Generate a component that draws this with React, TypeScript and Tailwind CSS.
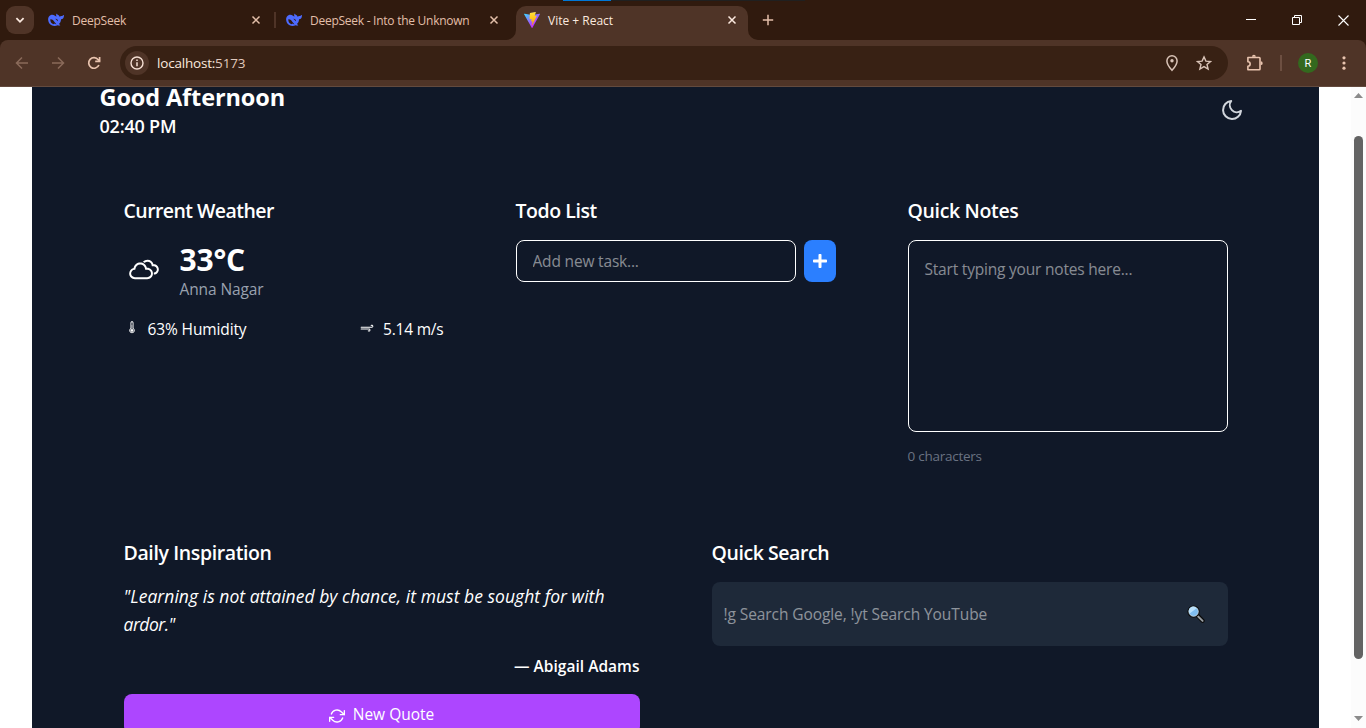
import React from 'react';
import { FiMoon, FiRefreshCw } from 'react-icons/fi';
import { FaPlus } from 'react-icons/fa';
import { WiCloudy, WiStrongWind, WiThermometer } from 'react-icons/wi';

function WhaleIcon() {
  return (
    <svg width="16" height="16" viewBox="0 0 16 16" fill="none" className="shrink-0">
      <path
        fill="#4d6bfe"
        d="M15.800 3c-.2-.1-.3.1-.5.2-.4.5-.9.700-1.500.7-.9-.1-1.600.2-2.300.9-.1-.9-.6-1.400-1.300-1.700-.4-.2-.8-.4-1-.8-.1-.3-.1-.6-.3-.6-.3 0-.4.2-.5.4-.4.8-.3 1.700.2 2.400-.6.1-1-.3-1.600-.8C5.700 2.900 4.400 2.500 2.900 3 1 3.700.1 5.300.1 7.600c.1 2.600 1.300 4.600 3.500 5.700 1.900 1 4.300.9 6-.1.5.3 1.600.5 2.300.3.500-.2.400-.6 0-.8-.700-.2-1-.5-1-.6 1.500-1.400 2-3 2.200-4.900 1.600-.1 2.600-1.200 2.800-3 .1-.5.200-1-.1-1.200Z"
      />
      <path
        fill="#301a0e"
        d="M2.300 7.400c2-.3 3.200 1.200 4.200 2.500.9 1.200 1.600 1.900 2.300 2.200-.9.300-1.900 0-2.700-.7l-.5.900C3.300 11.500 2.200 9.600 2.300 7.400Z"
      />
      <path fill="#301a0e" d="M7.400 6.900c1.200-.3 2.300.5 2.500 1.900l-.5.500c-.2-.9-.8-1.600-2-2.400Z" />
    </svg>
  );
}

function ViteIcon() {
  return (
    <svg width="16" height="16" viewBox="0 0 256 257" className="shrink-0">
      <defs>
        <linearGradient id="vite-shield" x1="-.8%" x2="57.6%" y1="7.700%" y2="78.400%">
          <stop offset="0%" stopColor="#41D1FF" />
          <stop offset="100%" stopColor="#BD34FE" />
        </linearGradient>
        <linearGradient id="vite-bolt" x1="43.400%" x2="50.300%" y1="2.200%" y2="89%">
          <stop offset="0%" stopColor="#FFEA83" />
          <stop offset="8.300%" stopColor="#FFDD35" />
          <stop offset="100%" stopColor="#FFA800" />
        </linearGradient>
      </defs>
      <path
        fill="url(#vite-shield)"
        d="M255.153 37.938L134.897 252.976c-2.483 4.440-8.862 4.466-11.382.048L.875 37.958c-2.746-4.814 1.371-10.646 6.827-9.670l120.385 21.517a6.537 6.537 0 0 0 2.322-.004l117.867-21.483c5.438-.991 9.574 4.796 6.877 9.620Z"
      />
      <path
        fill="url(#vite-bolt)"
        d="M185.432.063L96.440 17.501a3.268 3.268 0 0 0-2.634 3.014l-5.474 92.456a3.268 3.268 0 0 0 3.997 3.378l24.777-5.718c2.318-.535 4.413 1.507 3.936 3.838l-7.361 36.047c-.495 2.426 1.782 4.500 4.151 3.780l15.304-4.649c2.372-.720 4.652 1.360 4.150 3.788l-11.698 56.621c-.732 3.542 3.979 5.473 5.943 2.437l1.313-2.028l72.516-144.720c1.215-2.423-.880-5.186-3.540-4.672l-25.505 4.922c-2.396.462-4.435-1.770-3.759-4.114l16.646-57.705c.677-2.350-1.370-4.583-3.769-4.113Z"
      />
    </svg>
  );
}

function CloseIcon({ color }: { color: string }) {
  return (
    <svg width="16" height="16" viewBox="0 0 16 16" className="shrink-0" stroke={color} strokeWidth="1.5">
      <path d="M4.500 4.500l7 7M11.500 4.500l-7 7" />
    </svg>
  );
}

function TabStrip() {
  return (
    <div className="relative flex h-10 items-center bg-[#301a0e] text-[12px] text-[#e3bfa9]">
      <div className="absolute top-0 left-[563px] flex h-px">
        <div className="w-12 bg-[#0078d7]" />
        <div className="w-[194px] bg-[#202020]" />
      </div>
      <div className="ml-1.5 flex size-7 items-center justify-center rounded-[9px] bg-[#4f3427]">
        <svg width="10" height="10" viewBox="0 0 10 10" fill="none" stroke="#fbe9df" strokeWidth="1.800">
          <path d="M1.400 3.200L5 6.800l3.600-3.600" />
        </svg>
      </div>
      <div className="ml-3.5 flex w-[216px] items-center">
        <WhaleIcon />
        <span className="ml-2 flex-1 pt-0.5 tracking-[-0.23px]">DeepSeek</span>
        <CloseIcon color="#e3bfa9" />
      </div>
      <div className="ml-2.5 h-4 w-0.5 bg-[#4f3427]" />
      <div className="ml-2.5 flex w-[216px] items-center">
        <WhaleIcon />
        <span className="ml-2 flex-1 pt-0.5 tracking-[-0.26px]">DeepSeek - Into the Unknown</span>
        <CloseIcon color="#e3bfa9" />
      </div>
      <div className="ml-1 flex h-10 items-end">
        <svg width="10" height="10" viewBox="0 0 10 10">
          <path d="M0 10A10 10 0 0 0 10 0V10Z" fill="#4f3427" />
        </svg>
        <div className="flex h-[34px] w-[232px] items-center rounded-t-[10px] bg-[#4f3427] pr-2 pb-[6px] pl-2 text-[#fbe9df]">
          <ViteIcon />
          <span className="ml-2 flex-1 pt-px">Vite + React</span>
          <CloseIcon color="#fbe9df" />
        </div>
        <svg width="10" height="10" viewBox="0 0 10 10">
          <path d="M10 10A10 10 0 0 1 0 0V10Z" fill="#4f3427" />
        </svg>
      </div>
      <svg width="12" height="12" viewBox="0 0 12 12" className="ml-1" stroke="#e3bfa9" strokeWidth="1.500">
        <path d="M6 .8v10.400M.8 6h10.400" />
      </svg>
      <div className="mr-[17px] ml-auto flex items-center">
        <svg width="10" height="10" viewBox="0 0 10 10" shapeRendering="crispEdges">
          <path d="M0 4h10v1H0z" fill="#fff" />
        </svg>
        <svg width="10" height="10" viewBox="0 0 10 10" className="ml-9" fill="none" stroke="#fff">
          <path d="M.5 2.500h7v7h-7zM2.500 2.500V.5h7v7h-2" />
        </svg>
        <svg width="11" height="11" viewBox="0 0 11 11" className="ml-9" stroke="#fff" strokeWidth="1.100">
          <path d="M.5 .5l10 10M10.500 .5l-10 10" />
        </svg>
      </div>
    </div>
  );
}

function Toolbar() {
  return (
    <div className="bg-[#301a0e]">
      <div className="flex h-[47px] items-center rounded-t-lg border-b border-[#634a3e] bg-[#4f3427]">
        <svg width="14" height="14" viewBox="0 0 14 14" className="ml-[15px]" fill="none" stroke="#8a6a5a" strokeWidth="1.500">
          <path d="M13 7H1.500M7 1.500L1.500 7 7 12.500" />
        </svg>
        <svg width="14" height="14" viewBox="0 0 14 14" className="ml-[22px]" fill="none" stroke="#8a6a5a" strokeWidth="1.500">
          <path d="M1 7h11.500M7 1.500L12.500 7 7 12.500" />
        </svg>
        <svg width="14" height="14" viewBox="0 0 14 14" className="ml-[22px]" fill="none" stroke="#e9c4af" strokeWidth="1.700">
          <path d="M11.900 9A5.300 5.300 0 1 1 11.200 3.700L12.700 5.200" />
          <path d="M12.600 1v4.400H8.200" />
        </svg>
        <div className="ml-[19px] flex h-[34px] w-[1108px] items-center rounded-full bg-[#382114] pr-4 pl-[5px]">
          <div className="flex size-6 items-center justify-center rounded-full bg-[#4f3427]">
            <svg width="14" height="14" viewBox="0 0 14 14" fill="none" stroke="#f5dfd3" strokeWidth="1.400">
              <circle cx="7" cy="7" r="6" />
              <path d="M7 6.200v4M7 3.600v1.500" strokeWidth="1.500" />
            </svg>
          </div>
          <span className="ml-2 text-[13.5px] tracking-[-0.2px] text-[#e0c9bd]">
            <span className="text-[#fbe9df]">localhost:</span>5173
          </span>
          <svg width="14" height="18" viewBox="0 0 14 18" className="ml-auto" fill="none" stroke="#d9c3b7" strokeWidth="1.500">
            <path d="M7 16.300C3.400 12.300 1.900 9.500 1.900 6.900a5.100 5.100 0 0 1 10.200 0c0 2.600-1.500 5.400-5.100 9.400Z" />
            <circle cx="7" cy="6.700" r="1.700" fill="#d9c3b7" stroke="none" />
          </svg>
          <svg width="16" height="16" viewBox="0 0 16 16" className="ml-[17px]" fill="none" stroke="#d9c3b7" strokeWidth="1.400">
            <path d="M8 1.900l1.900 4.200 4.600.4-3.500 3 1.100 4.500L8 11.600 3.900 14 5 9.500l-3.500-3 4.600-.4Z" />
          </svg>
        </div>
        <svg width="18" height="18" viewBox="0 0 18 18" className="ml-[18px]" fill="none" stroke="#e9c4af" strokeWidth="1.600" strokeLinejoin="round">
          <path d="M1.900 3.500H13.200a.8.800 0 0 1 .8.800V15a.8.800 0 0 1-.8.800H1.900V12.300a2 2 0 0 0 0-4.500Z" />
          <path d="M6 2.700a1.900 1.900 0 0 1 3.800 0ZM14.800 7.300a1.900 1.900 0 0 1 0 3.800Z" fill="#e9c4af" stroke="none" />
        </svg>
        <div className="ml-4 h-4 w-0.5 bg-[#6d4f41]" />
        <div className="ml-4 flex size-5 items-center justify-center rounded-full bg-[#33691e] font-['Roboto',sans-serif] text-[11px] leading-none text-white">
          R
        </div>
        <svg width="4" height="14" viewBox="0 0 4 14" className="ml-6" fill="#e9c4af">
          <circle cx="2" cy="1.800" r="1.600" />
          <circle cx="2" cy="7" r="1.600" />
          <circle cx="2" cy="12.200" r="1.600" />
        </svg>
      </div>
    </div>
  );
}

function MagnifierIcon() {
  return (
    <svg width="18" height="18" viewBox="0 0 18 18">
      <path d="M11 11L15.600 15.700" stroke="#0a0a0a" strokeWidth="4.200" strokeLinecap="round" />
      <path d="M10.600 11L15.600 15.900" stroke="#989da2" strokeWidth="2" strokeLinecap="round" />
      <circle cx="6.600" cy="6.600" r="5.400" fill="#8cc8f5" stroke="#0a0a0a" strokeWidth="1.600" />
      <circle cx="6.600" cy="6.600" r="4.700" fill="#7fbdf0" stroke="#c6d4de" strokeWidth=".8" />
      <path d="M2.700 8.600A4.300 4.300 0 0 1 9.500 3.200Z" fill="#b9e0fb" />
    </svg>
  );
}

function Card({ title, titleClass, className = '', children }: { title: string; titleClass: string; className?: string; children: React.ReactNode }) {
  return (
    <section className={`p-6 ${className}`}>
      <h2 className={`mb-4 pt-0.5 text-[19.5px] leading-[26px] font-semibold whitespace-nowrap text-white ${titleClass}`}>{title}</h2>
      {children}
    </section>
  );
}

function Dashboard() {
  return (
    <main className="mx-8 min-w-0 flex-1 overflow-hidden bg-[#101828] text-white">
      <div className="mx-auto w-[1152px]">
        <header className="flex h-[85px] items-start justify-between">
          <div>
            <h1 className="text-[23.5px] leading-[21px] font-bold tracking-[-0.12px]">Good Afternoon</h1>
            <p className="mt-1 text-[18px] leading-7 font-semibold tracking-[-0.2px]">02:40 PM</p>
          </div>
          <button className="mt-[11px] mr-2" aria-label="Toggle theme">
            <FiMoon size={24} className="text-[#d1d5dc]" />
          </button>
        </header>

        <div className="grid grid-cols-3 gap-6">
          <Card title="Current Weather" titleClass="tracking-[-0.56px]" className="h-[318px]">
            <div className="flex items-center gap-4">
              <WiCloudy size={40} />
              <div>
                <p className="pt-1 text-[30px] leading-8 font-bold tracking-[-0.2px]">33°C</p>
                <p className="pt-0.5 text-[15.5px] leading-[22px] tracking-[-0.1px] text-[#99a1af]">Anna Nagar</p>
              </div>
            </div>
            <div className="mt-4 flex items-center justify-between text-[15.5px] leading-6">
              <div className="flex items-center gap-2">
                <WiThermometer size={16} />
                <span className="pt-0.5 leading-[22px] tracking-[-0.12px]">63% Humidity</span>
              </div>
              <div className="flex items-center gap-2">
                <WiStrongWind size={16} />
                <span className="pt-0.5 leading-[22px] tracking-[-0.2px]">5.14 m/s</span>
              </div>
            </div>
          </Card>

          <Card title="Todo List" titleClass="tracking-[-0.45px]">
            <div className="flex gap-2">
              <input
                placeholder="Add new task..."
                className="h-[42px] min-w-0 flex-1 rounded-lg border border-white bg-transparent px-4 text-[15.5px] tracking-[-0.18px] placeholder:text-white/50"
              />
              <button className="flex w-8 items-center justify-center rounded-lg bg-[#2b7fff]" aria-label="Add task">
                <FaPlus size={16} />
              </button>
            </div>
          </Card>

          <Card title="Quick Notes" titleClass="tracking-[-0.34px]">
            <textarea
              placeholder="Start typing your notes here..."
              className="block h-48 w-full resize-none rounded-lg border border-white bg-transparent p-4 text-[15.5px] leading-6 tracking-[-0.2px] placeholder:text-white/50"
            />
            <p className="mt-3.5 text-[13.5px] leading-5 tracking-[-0.26px] text-[#6a7282]">0 characters</p>
          </Card>
        </div>

        <div className="mt-6 grid grid-cols-2 gap-6">
          <Card title="Daily Inspiration" titleClass="tracking-[-0.38px]">
            <p className="text-[17.5px] leading-7 whitespace-nowrap italic tracking-[0.035px]">
              "Learning is not attained by chance, it must be sought for with
              <br />
              <span className="tracking-[-0.5px]">ardor."</span>
            </p>
            <p className="mt-4 pt-px text-right text-[15.5px] leading-[23px] font-semibold tracking-[0.02px]">— Abigail Adams</p>
            <button className="mt-4 flex h-10 w-full items-center justify-center gap-2 rounded-lg bg-[#ad46ff] text-[15.5px]">
              <FiRefreshCw size={16} className="mt-1" />
              <span className="pt-0.5">New Quote</span>
            </button>
          </Card>

          <Card title="Quick Search" titleClass="tracking-[-0.43px]">
            <div className="flex h-16 items-center rounded-lg bg-[#1e2939] pr-[23px] pl-3">
              <input
                placeholder="!g Search Google, !yt Search YouTube"
                className="min-w-0 flex-1 bg-transparent pt-0.5 text-[15.5px] tracking-[-0.09px] placeholder:text-white/50"
              />
              <MagnifierIcon />
            </div>
          </Card>
        </div>
      </div>
    </main>
  );
}

function ScrollBar() {
  return (
    <div className="flex w-[15px] shrink-0 flex-col items-center bg-[#fcfcfc]">
      <svg width="9" height="5" viewBox="0 0 9 5" className="mt-1.5" fill="#8b8b8b">
        <path d="M4.500 0L9 5H0Z" />
      </svg>
      <div className="mt-[38px] h-[523px] w-[9px] rounded-full bg-[#636363]" />
      <svg width="9" height="5" viewBox="0 0 9 5" className="mt-auto mb-[7px]" fill="#8b8b8b">
        <path d="M0 0h9L4.500 5Z" />
      </svg>
    </div>
  );
}

export default function App() {
  return (
    <div className="flex h-[728px] w-[1366px] flex-col overflow-hidden bg-white font-['Open_Sans','Noto_Sans',sans-serif]">
      <TabStrip />
      <Toolbar />
      <div className="flex min-h-0 flex-1">
        <Dashboard />
        <ScrollBar />
      </div>
    </div>
  );
}
